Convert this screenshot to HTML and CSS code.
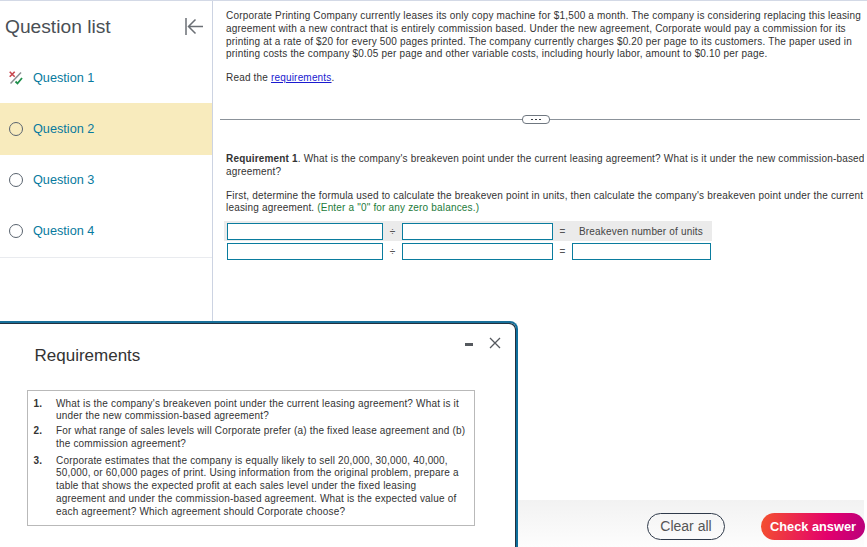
FILE: index.html
```html
<!DOCTYPE html>
<html lang="en">
<head>
<meta charset="utf-8">
<title>Question</title>
<link rel="stylesheet" href="styles.css">
</head>
<body>
<div class="app">
  <div class="workspace">
    <aside class="sidebar">
      <header class="side-head">
        <h2 class="side-title">Question list</h2>
        <svg class="collapse" width="18" height="17" viewBox="0 0 18 17"><path d="M1 0v17M18 8.500H3.500M10.500 1.500l-7 7 7 7" fill="none" stroke="#6b6f75" stroke-width="1.500"/></svg>
      </header>
      <ul class="qlist">
        <li class="qitem">
          <svg class="qicon" width="14" height="14" viewBox="0 0 14 14"><path d="M1.500 12.500L12 1.500" stroke="#8a8d91" stroke-width="1.500" fill="none"/><path d="M.7.700l5 5M5.700.700l-5 5" stroke="#c8474f" stroke-width="1.600" fill="none"/><path d="M6.500 10.500l2 2L13 7" stroke="#1f8f4c" stroke-width="1.800" fill="none"/></svg>
          <span class="qlabel">Question 1</span>
        </li>
        <li class="qitem current"><span class="radio"></span><span class="qlabel">Question 2</span></li>
        <li class="qitem after"><span class="radio"></span><span class="qlabel">Question 3</span></li>
        <li class="qitem last"><span class="radio"></span><span class="qlabel">Question 4</span></li>
      </ul>
    </aside>
    <main class="content">
      <p class="para">Corporate Printing Company currently leases its only copy machine for $1,500 a month. The company is considering replacing this leasing<br>agreement with a new contract that is entirely commission based. Under the new agreement, Corporate would pay a commission for its<br>printing at a rate of $20 for every 500 pages printed. The company currently charges $0.20 per page to its customers. The paper used in<br>printing costs the company $0.05 per page and other variable costs, including hourly labor, amount to $0.10 per page.</p>
      <p class="para read">Read the <a class="link" href="#">requirements</a>.</p>
      <div class="divider"><span class="pill"><i></i><i></i><i></i></span></div>
      <p class="para req"><b>Requirement 1</b>. What is the company's breakeven point under the current leasing agreement? What is it under the new commission-based<br>agreement?</p>
      <p class="para first">First, determine the formula used to calculate the breakeven point in units, then calculate the company's breakeven point under the current<br>leasing agreement. <span class="hint">(Enter a "0" for any zero balances.)</span></p>
      <div class="formula">
        <div class="frow shaded">
          <span class="field wide"></span><span class="op">÷</span><span class="field mid"></span><span class="op eq">=</span><span class="result">Breakeven number of units</span>
        </div>
        <div class="frow">
          <span class="field wide"></span><span class="op">÷</span><span class="field mid"></span><span class="op eq">=</span><span class="field end"></span>
        </div>
      </div>
    </main>
  </div>
  <footer class="footer">
    <button class="btn clear">Clear all</button>
    <button class="btn check">Check answer</button>
  </footer>
  <section class="modal">
    <h2 class="modal-title">Requirements</h2>
    <span class="min"></span>
    <svg class="close" width="12" height="12" viewBox="0 0 12 12"><path d="M1 1l10 10M11 1L1 11" stroke="#55595e" stroke-width="1.300" fill="none"/></svg>
    <ol class="reqs">
      <li class="r r1"><span class="n">1.</span><span>What is the company's breakeven point under the current leasing agreement? What is it<br>under the new commission-based agreement?</span></li>
      <li class="r r2"><span class="n">2.</span><span>For what range of sales levels will Corporate prefer (a) the fixed lease agreement and (b)<br>the commission agreement?</span></li>
      <li class="r r3"><span class="n">3.</span><span>Corporate estimates that the company is equally likely to sell 20,000, 30,000, 40,000,<br>50,000, or 60,000 pages of print. Using information from the original problem, prepare a<br>table that shows the expected profit at each sales level under the fixed leasing<br>agreement and under the commission-based agreement. What is the expected value of<br>each agreement? Which agreement should Corporate choose?</span></li>
    </ol>
  </section>
</div>
</body>
</html>
```
FILE: styles.css
```css
* { box-sizing: border-box; }
html, body { margin: 0; padding: 0; background: #fff; }
.app {
  position: relative;
  width: 867px;
  height: 547px;
  overflow: hidden;
  display: flex;
  flex-direction: column;
  font-family: "Liberation Sans", Arial, sans-serif;
  color: #333;
}
.workspace {
  display: flex;
  height: 500px;
  border-top: 1px solid #d3d9e6;
}
.sidebar {
  width: 213px;
  flex: none;
  border-right: 1px solid #ccd3e2;
}
.side-head {
  height: 51px;
  display: flex;
  align-items: center;
  justify-content: space-between;
  padding: 0 9px 0 5px;
}
.side-title {
  margin: 0;
  font-size: 19.200px;
  font-weight: 400;
  color: #4a4f55;
}
.qlist { list-style: none; margin: 0; padding: 0; }
.qitem {
  height: 51px;
  display: flex;
  align-items: center;
  padding-left: 9px;
  gap: 10px;
}
.qitem.current { height: 52px; padding-bottom: 1px; background: #f8ebbd; }
.qitem.after { height: 50px; }
.qitem.last { height: 53px; padding-bottom: 1px; border-bottom: 1px solid #e9ebef; }
.qicon { width: 14px; height: 14px; flex: none; }
.radio {
  width: 14px;
  height: 14px;
  border: 1.500px solid #59636e;
  border-radius: 50%;
  flex: none;
}
.qlabel { font-size: 12.700px; color: #087a9e; }
.content {
  flex: 1;
  min-width: 0;
  padding: 9px 0 0 13px;
  overflow: hidden;
  margin-right: 3px;
}
.para {
  margin: 0;
  font-size: 10px;
  letter-spacing: .18px;
  line-height: 12.800px;
  white-space: nowrap;
  color: #333;
}
.read { margin-top: 10.500px; }
.link { color: #1a1ad0; text-decoration: underline; }
.divider {
  position: relative;
  margin: 34.500px 4px 0 -6px;
  height: 1px;
  background: #8b929a;
}
.pill {
  position: absolute;
  left: 302px;
  top: -4px;
  width: 28px;
  height: 9px;
  background: #fff;
  border: 1px solid #6f7780;
  border-radius: 4px;
  display: flex;
  align-items: center;
  justify-content: center;
  gap: 2px;
}
.pill i { width: 2px; height: 1.500px; background: #3c4148; }
.req { margin-top: 33px; }
.first { margin-top: 11px; }
.hint { color: #1c7a3a; }
.formula { margin: 6px 0 0 -2px; width: 488px; }
.frow {
  display: flex;
  align-items: center;
  height: 20px;
  padding-left: 3px;
  font-size: 10px;
  letter-spacing: .18px;
}
.frow + .frow { height: 21px; }
.shaded { background: #ebebeb; }
.field {
  height: 17px;
  background: #fff;
  border: 1px solid #0a7c9e;
  flex: none;
}
.wide { width: 156px; }
.mid { width: 151px; }
.end { width: 139px; }
.op { width: 19px; text-align: center; color: #555; flex: none; }
.eq { width: 19px; }
.result { margin-left: 7px; color: #444; }
.footer {
  width: 864px;
  flex: 1;
  display: flex;
  justify-content: flex-end;
  align-items: flex-start;
  gap: 36px;
  padding-top: 13px;
  background: linear-gradient(#f2f2f2, #fdfdfd);
}
.btn {
  height: 27px;
  border-radius: 14px;
  font-family: "Liberation Sans", Arial, sans-serif;
  padding: 0 0 2px;
  cursor: pointer;
}
.clear {
  width: 78px;
  font-size: 14px;
  border: 1.500px solid #2f3a4a;
  color: #555;
  background: transparent;
}
.check {
  width: 104px;
  margin-right: -1px;
  padding-bottom: 0;
  border: 0;
  font-size: 12.800px;
  color: #fff;
  font-weight: 700;
  background: linear-gradient(100deg, #f4512e, #e3006d 65%, #b8007c);
}
.modal {
  position: absolute;
  left: -12px;
  top: 321px;
  width: 530px;
  height: 240px;
  background: #fff;
  border: 2.500px solid #0f6f9c;
  border-top-color: #176f99;
  border-radius: 8px;
  box-shadow: inset -1px 1px 0 #22313f;
}
.modal-title {
  position: absolute;
  left: 44.500px;
  top: 22px;
  margin: 0;
  font-size: 17px;
  line-height: 21px;
  font-weight: 400;
  color: #333;
}
.min {
  position: absolute;
  left: 474.500px;
  top: 20px;
  width: 8px;
  height: 2.500px;
  background: #55595e;
}
.close { position: absolute; left: 498.500px; top: 13.500px; }
.reqs {
  position: absolute;
  left: 36.500px;
  top: 66.500px;
  width: 448px;
  height: 136px;
  margin: 0;
  padding: 7px 8px 0 6px;
  list-style: none;
  border: 1px solid #b9b9b9;
  font-size: 10px;
  letter-spacing: .18px;
  line-height: 12.800px;
  white-space: nowrap;
  color: #333;
}
.r { display: flex; }
.r2 { margin-top: 2px; }
.r3 { margin-top: 4px; }
.n { width: 22.500px; flex: none; font-weight: 700; }
```
